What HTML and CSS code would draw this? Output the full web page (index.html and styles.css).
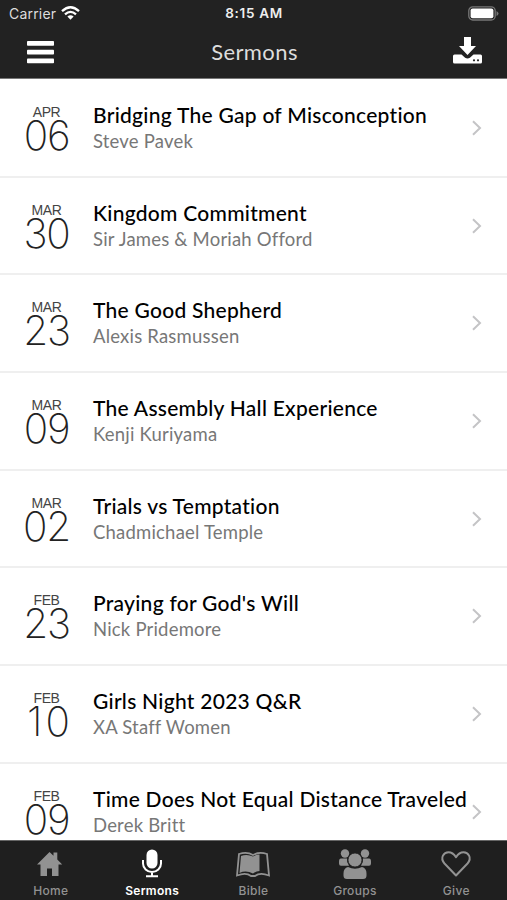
FILE: index.html
```
<!DOCTYPE html>
<html lang="en">
<head>
<meta charset="utf-8">
<title>Sermons</title>
<link rel="stylesheet" href="styles.css">
</head>
<body>
<div class="app">
  <header class="top">
    <div class="status">
      <div class="carrier"><span>Carrier</span>
        <svg class="wifi" viewBox="0 0 19 14"><g fill="none" stroke="#fff" stroke-width="2.3"><path d="M1 5.2Q9.500-2.600 18 5.200"/><path d="M4 8.400Q9.500 3.400 15 8.400"/></g><path d="M6.400 10.500Q9.500 8 12.600 10.500L9.500 13.800z" fill="#fff"/></svg>
      </div>
      <div class="clock">8:15 AM</div>
      <svg class="battery" viewBox="0 0 31 15"><rect x=".8" y=".8" width="26.400" height="13.200" rx="4" fill="#222" stroke="#777" stroke-width="1.300"/><rect x="2.600" y="2.600" width="22.800" height="9.600" rx="2" fill="#fff"/><path d="M28.500 5v5q2-1 2-2.500T28.500 5z" fill="#777"/></svg>
    </div>
    <nav class="navbar">
      <svg class="menu" viewBox="0 0 27 24" fill="#fff"><rect y="1" width="27" height="4.800" rx=".8"/><rect y="9.700" width="27" height="4.800" rx=".8"/><rect y="18.400" width="27" height="4.800" rx=".8"/></svg>
      <h1>Sermons</h1>
      <svg class="download" viewBox="0 0 29 28" fill="#fff"><path d="M11 0h7v9h5l-8.500 9L6 9h5z"/><path d="M1.500 17.500h7l3.600 3.200q2.400 1.500 4.800 0l3.600-3.200h7q1.500 0 1.500 1.500v6q0 1.500-1.500 1.500h-26Q0 26.500 0 25v-6q0-1.500 1.500-1.500z"/><g fill="#222"><circle cx="21" cy="23.300" r="1.100"/><circle cx="25" cy="23.300" r="1.100"/></g></svg>
    </nav>
  </header>
  <main class="list">
    <article class="row"><div class="date"><span class="month">APR</span><span class="day">06</span></div><div class="info"><h2>Bridging The Gap of Misconception</h2><p>Steve Pavek</p></div><svg class="chev" viewBox="0 0 10 16"><path d="M1 1.300L8 8l-7 6.700"/></svg></article>
    <article class="row"><div class="date"><span class="month">MAR</span><span class="day">30</span></div><div class="info"><h2>Kingdom Commitment</h2><p>Sir James &amp; Moriah Offord</p></div><svg class="chev" viewBox="0 0 10 16"><path d="M1 1.300L8 8l-7 6.700"/></svg></article>
    <article class="row"><div class="date"><span class="month">MAR</span><span class="day">23</span></div><div class="info"><h2>The Good Shepherd</h2><p>Alexis Rasmussen</p></div><svg class="chev" viewBox="0 0 10 16"><path d="M1 1.300L8 8l-7 6.700"/></svg></article>
    <article class="row"><div class="date"><span class="month">MAR</span><span class="day">09</span></div><div class="info"><h2>The Assembly Hall Experience</h2><p>Kenji Kuriyama</p></div><svg class="chev" viewBox="0 0 10 16"><path d="M1 1.300L8 8l-7 6.700"/></svg></article>
    <article class="row"><div class="date"><span class="month">MAR</span><span class="day">02</span></div><div class="info"><h2>Trials vs Temptation</h2><p>Chadmichael Temple</p></div><svg class="chev" viewBox="0 0 10 16"><path d="M1 1.300L8 8l-7 6.700"/></svg></article>
    <article class="row"><div class="date"><span class="month">FEB</span><span class="day">23</span></div><div class="info"><h2>Praying for God's Will</h2><p>Nick Pridemore</p></div><svg class="chev" viewBox="0 0 10 16"><path d="M1 1.300L8 8l-7 6.700"/></svg></article>
    <article class="row"><div class="date"><span class="month">FEB</span><span class="day narrow">10</span></div><div class="info"><h2>Girls Night 2023 Q&amp;R</h2><p>XA Staff Women</p></div><svg class="chev" viewBox="0 0 10 16"><path d="M1 1.300L8 8l-7 6.700"/></svg></article>
    <article class="row"><div class="date"><span class="month">FEB</span><span class="day">09</span></div><div class="info"><h2>Time Does Not Equal Distance Traveled</h2><p>Derek Britt</p></div><svg class="chev" viewBox="0 0 10 16"><path d="M1 1.300L8 8l-7 6.700"/></svg></article>
  </main>
  <footer class="tabs">
    <div class="tab"><svg viewBox="0 0 36 32"><path fill="currentColor" d="M16.500 3L4 15.500H7.500V27H14V19.500H19V27H25.500V15.500H29.200L24.300 10.500V3.500H20.500V6.700z"/></svg><span>Home</span></div>
    <div class="tab active"><svg viewBox="0 0 36 32"><rect x="12.500" y=".5" width="11" height="19" rx="5.500" fill="currentColor"/><path d="M9 11v3.500a9 8.500 0 0 0 18 0V11M18 23v4M12 27.300h12" fill="none" stroke="currentColor" stroke-width="2"/></svg><span>Sermons</span></div>
    <div class="tab"><svg viewBox="0 0 36 32"><path d="M4 5Q12 2.500 18 6Q24 2.500 32 5L34 26.500Q25 23 20 27H16Q11 23 2 26.500z" fill="#1f1f1f" stroke="currentColor" stroke-width="1.800"/><path d="M6 7Q12 4.500 18 7.600Q21 5.600 24.500 5.600V22Q21 22 18 24.500Q11 21 4.500 24z" fill="currentColor"/></svg><span>Bible</span></div>
    <div class="tab"><svg viewBox="0 0 36 32" fill="currentColor"><circle cx="8" cy="4.500" r="4.200"/><circle cx="28" cy="4.500" r="4.200"/><path d="M4 9.500h6q-.5 4 2 7.200H4Q2 16.700 2 14.500v-2Q2 9.500 4 9.500zM32 9.500h-6q.5 4-2 7.200H32q2 0 2-2.200v-2q0-3-2-3z"/><circle cx="18" cy="11" r="7.100" stroke="#1f1f1f"/><path d="M11 18q7 3.500 14 0 4.500 1 4.500 6.500v2q0 3.500-3.500 3.500H10q-3.500 0-3.500-3.500v-2q0-5.500 4.500-6.500z"/></svg><span>Groups</span></div>
    <div class="tab"><svg viewBox="0 0 36 32"><path d="M18 26.500L6.500 14.500C1.500 8.500 6 3.200 10.500 3.200c3.500 0 5.500 1.800 7.500 5 2-3.200 4-5 7.500-5 4.500 0 9 5.300 4 11.300z" fill="none" stroke="currentColor" stroke-width="2" stroke-linejoin="round"/></svg><span>Give</span></div>
  </footer>
</div>
</body>
</html>
```
FILE: styles.css
```
* { box-sizing: border-box; }
body { margin: 0; background: #fff; }
h1, h2, p { margin: 0; font-weight: 400; }
svg { display: block; flex: none; }
.app {
  width: 507px;
  height: 900px;
  display: flex;
  flex-direction: column;
  overflow: hidden;
  font-family: Lato, "Liberation Sans", sans-serif;
}
.top {
  flex: none;
  height: 79px;
  background: #222;
  color: #fff;
  border-bottom: 1px solid #777;
}
.status {
  height: 27px;
  display: grid;
  grid-template-columns: 1fr auto 1fr;
  align-items: center;
  padding: 0 8px 0 9px;
  font: 500 13px/27px Inter, sans-serif;
}
.carrier { display: flex; gap: 5px; color: #ddd; font-weight: 400; font-size: 14px; letter-spacing: .2px; }
.wifi { width: 19px; height: 14px; margin-top: 6px; }
.clock { font-weight: 600; font-size: 13.5px; letter-spacing: .7px; color: #eee; }
.battery { width: 31px; height: 15px; justify-self: end; }
.navbar {
  height: 51px;
  display: grid;
  grid-template-columns: 1fr auto 1fr;
  align-items: center;
  padding: 0 25px 0 27px;
}
.menu { width: 27px; height: 24px; margin-top: -1px; }
.navbar h1 { font-size: 22px; line-height: 30px; letter-spacing: .4px; color: #ddd; margin-top: -2px; }
.download { width: 29px; height: 28px; justify-self: end; margin-top: -3px; }
.list { flex: 1; min-height: 0; overflow: hidden; padding-top: 1px; }
.row {
  height: 97.7px;
  display: flex;
  border-bottom: 2px solid #efefef;
}
.date {
  width: 93px;
  padding-top: 24px;
  flex: none;
  display: flex;
  flex-direction: column;
  align-items: center;
  color: #222;
}
.month { font: 400 14px/16px "Liberation Sans", sans-serif; letter-spacing: -.4px; color: #444; }
.day { font: 200 40.5px/31px Inter, sans-serif; letter-spacing: -1.200px; }
.narrow { letter-spacing: 3px; margin-right: -7px; }
.info { flex: 1; min-width: 0; padding-top: 21px; white-space: nowrap; }
.info h2 { font-size: 21px; line-height: 27px; font-weight: 500; color: #000; letter-spacing: .27px; }
.info p { font-size: 18.5px; line-height: 27px; color: #777; letter-spacing: .2px; }
.chev { width: 10px; height: 16px; margin: 40px 25px 0 0; fill: none; stroke: #c4c4c6; stroke-width: 2; }
.tabs {
  flex: none;
  height: 60px;
  display: grid;
  grid-template-columns: repeat(5, 1fr);
  background: #1f1f1f;
  border-top: 1px solid #666;
}
.tab {
  display: flex;
  flex-direction: column;
  align-items: center;
  padding-top: 8px;
  color: #929292;
  font: 500 12px/16px Inter, sans-serif;
  letter-spacing: .3px;
}
.tab svg { width: 36px; height: 32px; margin-bottom: 2px; }
.active { color: #fff; font-weight: 600; }
```
